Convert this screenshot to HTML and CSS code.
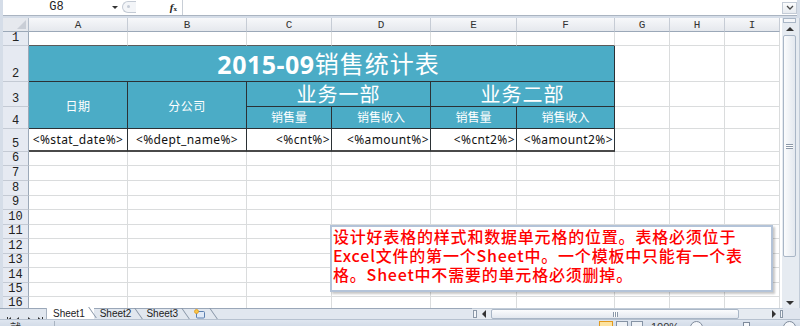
FILE: index.html
```html
<!DOCTYPE html>
<html lang="zh-CN">
<head>
    <meta charset="UTF-8">
    <meta name="viewport" content="width=device-width, initial-scale=1.0">
    <title>销售统计表模板</title>
    <link rel="stylesheet" href="styles.css">
</head>
<body>
<div class="window">
    <div class="fbar">
        <div class="namebox">G8<span class="drop"></span></div>
        <div class="grip"><span></span></div>
        <div class="fx"><i>f</i><small>x</small></div>
        <div class="finput"></div>
        <div class="expand">
            <svg width="8" height="6" viewBox="0 0 8 6"><path d="M1 1l3 3 3-3" fill="none" stroke="#4a4a4a" stroke-width="1.3"/></svg>
        </div>
    </div>

    <div class="main">
        <div class="sheet">
            <div class="grid">
                <div class="corner"></div><div class="ch">A</div><div class="ch">B</div><div class="ch">C</div><div class="ch">D</div><div class="ch">E</div><div class="ch">F</div><div class="ch">G</div><div class="ch">H</div><div class="ch">I</div>

                <div class="rh">1</div><div class="c edge"></div><div class="c edge"></div><div class="c edge"></div><div class="c edge"></div><div class="c edge"></div><div class="c edge"></div><div class="c"></div><div class="c"></div><div class="c"></div>

                <div class="rh">2</div>
                <div class="title"><b>2015-09</b>销售统计表</div>
                <div class="c"></div><div class="c"></div><div class="c"></div>

                <div class="rh">3</div>
                <div class="hd">日期</div>
                <div class="hd">分公司</div>
                <div class="dept">业务一部</div>
                <div class="dept">业务二部</div>
                <div class="c"></div><div class="c"></div><div class="c"></div>

                <div class="rh">4</div>
                <div class="sub">销售量</div>
                <div class="sub">销售收入</div>
                <div class="sub">销售量</div>
                <div class="sub">销售收入</div>
                <div class="c"></div><div class="c"></div><div class="c"></div>

                <div class="rh">5</div>
                <div class="val">&lt;%stat_date%&gt;</div>
                <div class="val">&lt;%dept_name%&gt;</div>
                <div class="val num">&lt;%cnt%&gt;</div>
                <div class="val num">&lt;%amount%&gt;</div>
                <div class="val num">&lt;%cnt2%&gt;</div>
                <div class="val num">&lt;%amount2%&gt;</div>
                <div class="c"></div><div class="c"></div><div class="c"></div>

                <div class="rh">6</div><div class="c"></div><div class="c"></div><div class="c"></div><div class="c"></div><div class="c"></div><div class="c"></div><div class="c"></div><div class="c"></div><div class="c"></div>
                <div class="rh">7</div><div class="c"></div><div class="c"></div><div class="c"></div><div class="c"></div><div class="c"></div><div class="c"></div><div class="c"></div><div class="c"></div><div class="c"></div>
                <div class="rh">8</div><div class="c"></div><div class="c"></div><div class="c"></div><div class="c"></div><div class="c"></div><div class="c"></div><div class="c"></div><div class="c"></div><div class="c"></div>
                <div class="rh">9</div><div class="c"></div><div class="c"></div><div class="c"></div><div class="c"></div><div class="c"></div><div class="c"></div><div class="c"></div><div class="c"></div><div class="c"></div>
                <div class="rh">10</div><div class="c"></div><div class="c"></div><div class="c"></div><div class="c"></div><div class="c"></div><div class="c"></div><div class="c"></div><div class="c"></div><div class="c"></div>
                <div class="rh">11</div><div class="c"></div><div class="c"></div><div class="c"></div><div class="c"></div><div class="c"></div><div class="c"></div><div class="c"></div><div class="c"></div><div class="c"></div>
                <div class="rh">12</div><div class="c"></div><div class="c"></div><div class="c"></div><div class="c"></div><div class="c"></div><div class="c"></div><div class="c"></div><div class="c"></div><div class="c"></div>
                <div class="rh">13</div><div class="c"></div><div class="c"></div><div class="c"></div><div class="c"></div><div class="c"></div><div class="c"></div><div class="c"></div><div class="c"></div><div class="c"></div>
                <div class="rh">14</div><div class="c"></div><div class="c"></div><div class="c"></div><div class="c"></div><div class="c"></div><div class="c"></div><div class="c"></div><div class="c"></div><div class="c"></div>
                <div class="rh">15</div><div class="c"></div><div class="c"></div><div class="c"></div><div class="c"></div><div class="c"></div><div class="c"></div><div class="c"></div><div class="c"></div><div class="c"></div>
                <div class="rh cut">16</div><div class="c"></div><div class="c"></div><div class="c"></div><div class="c"></div><div class="c"></div><div class="c"></div><div class="c"></div><div class="c"></div><div class="c"></div>
            </div>

            <div class="note">
                <div>设计好表格的样式和数据单元格的位置。表格必须位于</div>
                <div>Excel文件的第一个Sheet中。一个模板中只能有一个表</div>
                <div>格。Sheet中不需要的单元格必须删掉。</div>
            </div>
        </div>

        <div class="vscroll">
            <div class="vsplit"></div>
            <div class="vbtn"><span class="tri up"></span></div>
            <div class="vthumb"><span class="grip-h"></span></div>
            <div class="vtrack"></div>
            <div class="vbtn"><span class="tri down"></span></div>
        </div>
    </div>

    <div class="bottom">
        <div class="tabs">
            <div class="nav">
                <svg width="42" height="11" viewBox="0 0 42 11">
                    <rect x="4" y="3" width="1" height="5" fill="#333"/>
                    <path d="M8 3v5l-3-2.5z" fill="#333"/>
                    <path d="M16 3v5l-3-2.5z" fill="#333"/>
                    <path d="M25 3v5l3-2.5z" fill="#333"/>
                    <path d="M35 3v5l3-2.5z" fill="#333"/>
                    <rect x="39" y="3" width="1" height="5" fill="#333"/>
                </svg>
            </div>
            <div class="tab on">Sheet1</div>
            <div class="tab">Sheet2</div>
            <div class="tab">Sheet3</div>
            <div class="tab add">
                <svg width="13" height="10" viewBox="0 0 13 10">
                    <rect x="3.5" y="2.5" width="8" height="6.5" rx="1" fill="#dfe9f7" stroke="#5a7fb0"/>
                    <circle cx="3.5" cy="2.5" r="2" fill="#f7c64a" stroke="#e39a1d" stroke-width="0.8"/>
                </svg>
            </div>
        </div>
        <div class="hscroll">
            <span class="hsplit"></span>
            <span class="hbtn"><span class="tri left"></span></span>
            <span class="hthumb"><span class="grip-v"></span></span>
            <span class="htrack"></span>
            <span class="hbtn"><span class="tri right"></span></span>
            <span class="hend"></span>
        </div>
        <div class="sizer"></div>
    </div>

    <div class="status">
        <span class="ready">就绪</span>
        <span class="views">
            <span class="view on"></span>
            <span class="view"></span>
            <span class="view"></span>
        </span>
        <span class="zoom">100%</span>
        <span class="zbtn"></span>
        <span class="slider"><span class="knob"></span></span>
        <span class="zbtn"></span>
    </div>
</div>
</body>
</html>
```

FILE: styles.css
```css
* {
    box-sizing: border-box;
}
body {
    margin: 0;
    width: 800px;
    height: 326px;
    overflow: hidden;
    background: #d5dde8;
    font-family: "Noto Sans", "Noto Sans CJK SC", sans-serif;
}
.window {
    width: 800px;
    height: 326px;
    display: flex;
    flex-direction: column;
}

/* formula bar */
.fbar {
    height: 16px;
    margin: 0 3px 2px 3px;
    display: flex;
    background: #fff;
    border-bottom: 1px solid #aab4c1;
}
.namebox {
    width: 119px;
    position: relative;
    text-align: center;
    padding-right: 12px;
    font: 12px/15px "Liberation Mono", monospace;
    color: #222;
}
.drop {
    position: absolute;
    right: 4px;
    top: 6px;
    border-left: 3px solid transparent;
    border-right: 3px solid transparent;
    border-top: 3px solid #333;
}
.grip {
    width: 14px;
    margin: 1px 0 2px;
    border: 1px solid #c3cad4;
    border-right: none;
    border-radius: 7px 0 0 7px;
    background: #f3f5f8;
    position: relative;
}
.grip span {
    position: absolute;
    left: 4px;
    top: 3px;
    width: 3px;
    height: 3px;
    border-radius: 50%;
    background: #c5ccd6;
}
.fx {
    width: 47px;
    text-align: right;
    padding-right: 5px;
    border-right: 1px solid #c8ced6;
    font: bold 11px/14px "Liberation Serif", serif;
    color: #222;
}
.fx small {
    font-size: 7px;
}
.finput {
    flex: 1;
}
.expand {
    width: 15px;
    margin: 2px 0 1px;
    border: 1px solid #c3cbd6;
    background: linear-gradient(#fbfcfd, #e7ebf0);
    display: flex;
    align-items: center;
    justify-content: center;
}

/* sheet */
.main {
    height: 290px;
    display: flex;
}
.sheet {
    width: 782px;
    padding-left: 3px;
    position: relative;
    overflow: hidden;
}
.grid {
    display: grid;
    grid-template-columns: 26px 99px 119px 85px 99px 86px 98px 55px 55px 55px;
    grid-template-rows: 14px 14px 36px 25px 22px 23px 14px 15px 15px 14px 15px 14px 15px 14px 15px 14px 14px;
    background: #fff;
}
.grid > div {
    border-right: 1px solid #dadcdd;
    border-bottom: 1px solid #dadcdd;
    display: flex;
    align-items: center;
    justify-content: center;
    white-space: nowrap;
    overflow: hidden;
}
.grid > .corner {
    background: #e6e9ee;
    border-right-color: #b3bdca;
    border-bottom-color: #9ba8b8;
    position: relative;
}
.corner::after {
    content: "";
    position: absolute;
    right: 2px;
    bottom: 2px;
    border-left: 9px solid transparent;
    border-bottom: 9px solid #c9ced6;
}
.grid > .ch {
    background: linear-gradient(#f7f8fa, #e5e8ed);
    border-right-color: #c6ccd5;
    border-bottom-color: #9ba8b8;
    font: 11px/13px "Liberation Mono", monospace;
    color: #333;
    padding-top: 1px;
}
.grid > .rh {
    background: #e6eaf2;
    border-right-color: #9ba8b8;
    border-bottom-color: #c4cad4;
    align-items: flex-end;
    font: 12px/13px "Liberation Mono", monospace;
    color: #222;
}
.grid > .rh.cut {
    align-items: flex-start;
}
.grid > .edge {
    border-bottom-color: #5a5a5a;
}
.grid > .title {
    grid-column: span 6;
    background: #4bacc6;
    border-right-color: #2b3135;
    border-bottom-color: #2b3135;
    color: #fff;
    font-size: 24px;
    line-height: 30px;
    letter-spacing: 1px;
    padding-left: 14px;
}
.title b {
    font-size: 25px;
    letter-spacing: 0.5px;
}
.grid > .hd,
.grid > .dept,
.grid > .sub {
    background: #4bacc6;
    border-right-color: #2b3135;
    border-bottom-color: #2b3135;
    color: #fff;
}
.grid > .hd {
    grid-row: span 2;
    font-size: 12px;
    letter-spacing: 0.5px;
    padding-top: 1px;
}
.grid > .dept {
    grid-column: span 2;
    font-size: 20px;
    line-height: 22px;
    letter-spacing: 1px;
    padding-top: 2px;
}
.grid > .sub {
    font-size: 12px;
    line-height: 16px;
}
.grid > .val {
    border-right-color: #2b3135;
    border-bottom: 2px solid #4a4a4a;
    font-size: 12px;
    letter-spacing: 0.4px;
    color: #111;
}
.grid > .num {
    justify-content: flex-end;
    padding-right: 1px;
}

/* text box */
.note {
    position: absolute;
    left: 330px;
    top: 207px;
    width: 443px;
    height: 67px;
    background: #fff;
    border: 2px solid #b3c3d8;
    box-shadow: 2px 2px 2px rgba(0, 0, 0, 0.22);
    padding: 0 0 0 1px;
    color: #ff0000;
    font-family: "Noto Sans CJK SC", sans-serif;
    font-size: 16px;
    font-weight: 500;
    letter-spacing: 0.8px;
    white-space: nowrap;
}
.note div {
    height: 19px;
    line-height: 19px;
}

/* vertical scrollbar */
.vscroll {
    width: 18px;
    padding: 0 3px 0 1px;
    display: flex;
    flex-direction: column;
    background: #e6ebf1;
    border-right: 1px solid #c2ccd8;
}
.vsplit {
    height: 5px;
    border: 1px solid #a9b6c6;
    background: #f4f6f9;
}
.vbtn {
    height: 11px;
    display: flex;
    align-items: center;
    justify-content: center;
}
.vthumb {
    height: 222px;
    margin-top: 1px;
    border: 1px solid #a9b6c6;
    border-radius: 2px;
    background: linear-gradient(90deg, #fbfcfd, #e3e8ef);
    display: flex;
    align-items: center;
    justify-content: center;
}
.vtrack {
    flex: 1;
}
.grip-h {
    width: 7px;
    height: 5px;
    border-top: 1px solid #8b98a8;
    border-bottom: 1px solid #8b98a8;
    background: linear-gradient(#fff 0 1px, #8b98a8 1px 2px, #fff 2px);
}
.tri {
    width: 0;
    height: 0;
}
.tri.up {
    border-left: 4px solid transparent;
    border-right: 4px solid transparent;
    border-bottom: 4px solid #333;
}
.tri.down {
    border-left: 4px solid transparent;
    border-right: 4px solid transparent;
    border-top: 4px solid #333;
}
.tri.left {
    border-top: 4px solid transparent;
    border-bottom: 4px solid transparent;
    border-right: 4px solid #333;
}
.tri.right {
    border-top: 4px solid transparent;
    border-bottom: 4px solid transparent;
    border-left: 4px solid #333;
}

/* sheet tabs + horizontal scrollbar */
.bottom {
    height: 11px;
    display: flex;
    background: #e1e7ef;
}
.tabs {
    width: 472px;
    display: flex;
    border-top: 1px solid #9aa7b8;
    padding-left: 3px;
}
.nav {
    width: 44px;
    border-right: 1px solid #a8b3c1;
    margin-top: -1px;
}
.tab {
    position: relative;
    padding: 0 9px 0 6px;
    font: 10px/10px "Liberation Sans", sans-serif;
    color: #222;
}
.tab::after {
    content: "";
    position: absolute;
    right: 1px;
    top: -1px;
    width: 1px;
    height: 11px;
    background: #8593a5;
    transform: skewX(35deg);
}
.tab.on {
    background: #fff;
    margin-top: -1px;
    padding-top: 1px;
}
.hscroll {
    width: 311px;
    display: flex;
    align-items: stretch;
    background: #e6ebf1;
    border-top: 1px solid #c2ccd8;
}
.hsplit {
    width: 4px;
    margin: 1px 2px 1px 1px;
    border: 1px solid #8b98a8;
    background: #f4f6f9;
}
.hbtn {
    width: 10px;
    display: flex;
    align-items: center;
    justify-content: center;
}
.hthumb {
    width: 248px;
    margin-left: 2px;
    border: 1px solid #a9b6c6;
    border-radius: 2px;
    background: linear-gradient(#fbfcfd, #e3e8ef);
    display: flex;
    align-items: center;
    justify-content: center;
}
.grip-v {
    width: 5px;
    height: 5px;
    border-left: 1px solid #8b98a8;
    border-right: 1px solid #8b98a8;
    background: linear-gradient(90deg, #fff 0 1px, #8b98a8 1px 2px, #fff 2px);
}
.htrack {
    flex: 1;
}
.hend {
    width: 3px;
    margin: 1px 0 1px 1px;
    border: 1px solid #8b98a8;
    background: #f4f6f9;
}
.sizer {
    flex: 1;
    background: #dfe5ee;
}

/* status bar */
.status {
    height: 7px;
    display: flex;
    align-items: flex-start;
    background: linear-gradient(#dfe6f0, #d3dce8);
    border-top: 1px solid #b6c1cf;
    overflow: hidden;
    padding-left: 10px;
    font-size: 11px;
    color: #333;
}
.ready {
    width: 20px;
    line-height: 14px;
    margin-top: 1px;
    border-right: 1px solid #a8b3c1;
    padding-right: 24px;
    box-sizing: content-box;
}
.views {
    margin-left: 544px;
    display: flex;
    gap: 3px;
    padding-top: 1px;
}
.view {
    width: 12px;
    height: 10px;
    border: 1px solid #8593a5;
    background: #eef1f5;
}
.view.on {
    width: 14px;
    border: 1px solid #e39a1d;
    background: #fde3a0;
}
.zoom {
    margin-left: 8px;
    font: 11px/14px "Liberation Sans", sans-serif;
}
.zbtn {
    width: 13px;
    height: 13px;
    margin: 1px 0 0 11px;
    border: 1px solid #7d8a9b;
    border-radius: 50%;
    background: #f5f7fa;
}
.slider {
    width: 76px;
    position: relative;
    margin-left: 2px;
}
.knob {
    position: absolute;
    left: 38px;
    top: 2px;
    width: 7px;
    height: 10px;
    border: 1px solid #7d8a9b;
    background: #f5f7fa;
}
.slider + .zbtn {
    margin-left: 2px;
}
```
